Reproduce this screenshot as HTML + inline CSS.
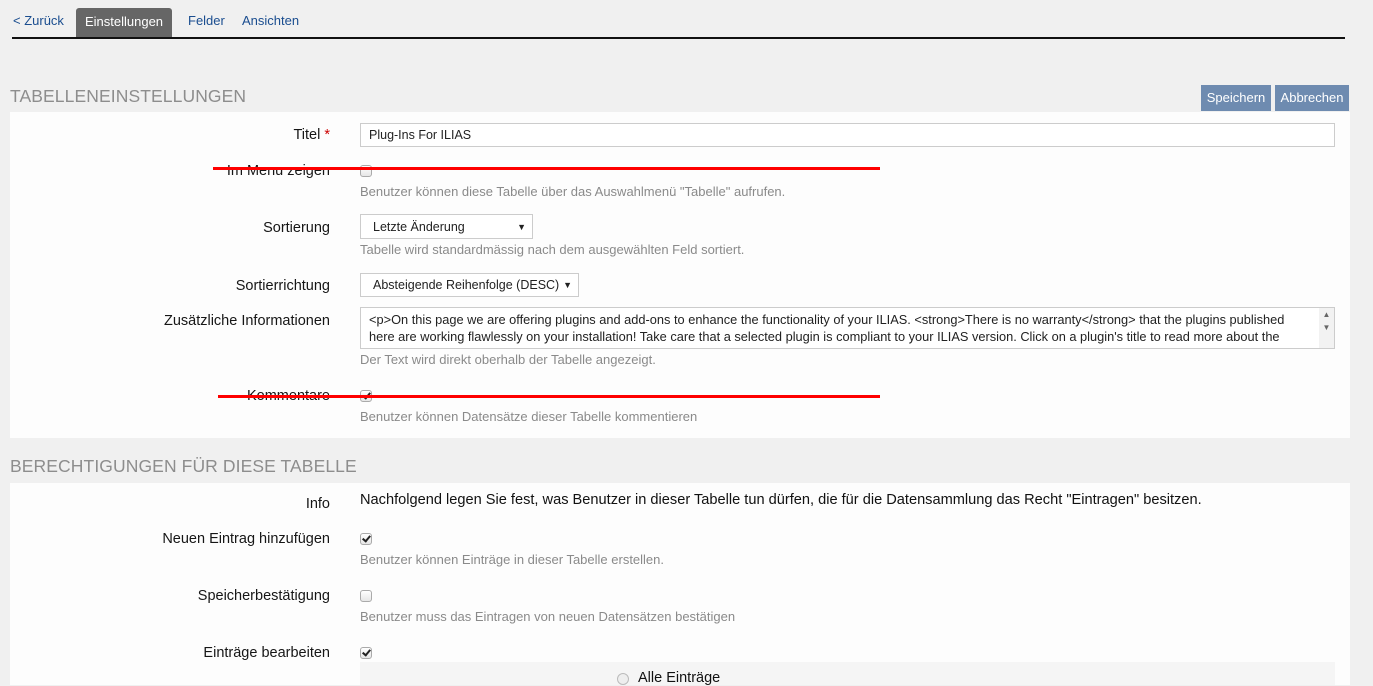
<!DOCTYPE html>
<html><head><meta charset="utf-8"><style>
*{margin:0;padding:0;box-sizing:border-box}
body{width:1373px;height:685px;overflow:hidden;background:#f0f0f0;font-family:"Liberation Sans",sans-serif;position:relative;color:#161616}
.a{position:absolute;white-space:nowrap}
.lbl{position:absolute;right:1043px;font-size:14.5px;color:#161616;white-space:nowrap}
.hint{position:absolute;left:360px;font-size:13px;color:#8a8a8a;white-space:nowrap}
.cb{position:absolute;left:360px;width:12px;height:12px;border:1px solid #aaa;border-radius:3px;background:linear-gradient(#fff,#e6e6e6)}
.cb.on::after{content:"";position:absolute;left:3px;top:0px;width:3px;height:6px;border:solid #222;border-width:0 2px 2px 0;transform:rotate(40deg)}
.inp{position:absolute;background:#fff;border:1px solid #ccc;font-size:12.5px;color:#222;padding-left:8px}
.red{position:absolute;height:3px;background:#f00}
h2{position:absolute;left:10px;font-weight:normal;font-size:17.5px;color:#8d8d8d;letter-spacing:.1px}
.btn{position:absolute;top:85px;height:26px;background:#6e8bb0;color:#fff;font-size:13px;line-height:26px;text-align:center}
</style></head><body>
<div class="a" style="left:13px;top:13px;font-size:13px;color:#1a4d8f">&lt; Zurück</div>
<div class="a" style="left:76px;top:8px;width:96px;height:30px;background:#666;border-radius:3px 3px 0 0;color:#fff;font-size:13px;line-height:27px;text-align:center">Einstellungen</div>
<div class="a" style="left:188px;top:13px;font-size:13px;color:#1a4d8f">Felder</div>
<div class="a" style="left:242px;top:13px;font-size:13px;color:#1a4d8f">Ansichten</div>
<div class="a" style="left:12px;top:37px;width:1333px;height:2px;background:#111"></div>

<h2 style="top:86px">TABELLENEINSTELLUNGEN</h2>
<div class="btn" style="left:1201px;width:70px">Speichern</div>
<div class="btn" style="left:1275px;width:74px">Abbrechen</div>

<div class="a" style="left:10px;top:112px;width:1340px;height:326px;background:#fdfdfd"></div>
<div class="lbl" style="top:127px">Titel <span style="color:#c00">*</span></div>
<div class="inp" style="left:360px;top:123px;width:975px;height:24px;line-height:22px">Plug-Ins For ILIAS</div>

<div class="lbl" style="top:163px">Im Menu zeigen</div>
<div class="cb" style="top:165px"></div>
<div class="hint" style="top:184px">Benutzer können diese Tabelle über das Auswahlmenü "Tabelle" aufrufen.</div>

<div class="lbl" style="top:220px">Sortierung</div>
<div class="inp" style="left:360px;top:214px;width:173px;height:25px;line-height:24px;padding-left:12px">Letzte Änderung<span style="position:absolute;right:6px;font-size:9px">▼</span></div>
<div class="hint" style="top:242px">Tabelle wird standardmässig nach dem ausgewählten Feld sortiert.</div>

<div class="lbl" style="top:278px">Sortierrichtung</div>
<div class="inp" style="left:360px;top:273px;width:219px;height:24px;line-height:23px;padding-left:12px">Absteigende Reihenfolge (DESC)<span style="position:absolute;right:6px;font-size:9px">▼</span></div>

<div class="lbl" style="top:313px">Zusätzliche Informationen</div>
<div class="inp" style="left:360px;top:307px;width:975px;height:42px;line-height:17px;padding-top:3px;padding-right:22px;overflow:hidden;white-space:normal;font-size:12.8px">&lt;p&gt;On this page we are offering plugins and add-ons to enhance the functionality of your ILIAS. &lt;strong&gt;There is no warranty&lt;/strong&gt; that the plugins published here are working flawlessly on your installation! Take care that a selected plugin is compliant to your ILIAS version. Click on a plugin's title to read more about the plugin and<div style="position:absolute;right:0;top:0;width:15px;height:40px;background:#f2f2f2;font-size:8px;color:#666;text-align:center;line-height:13px">▲<br>▼</div></div>
<div class="hint" style="top:352px">Der Text wird direkt oberhalb der Tabelle angezeigt.</div>

<div class="lbl" style="top:388px">Kommentare</div>
<div class="cb on" style="top:390px"></div>
<div class="hint" style="top:409px">Benutzer können Datensätze dieser Tabelle kommentieren</div>

<div class="red" style="left:213px;top:167px;width:667px"></div>
<div class="red" style="left:218px;top:395px;width:662px"></div>

<h2 style="top:456px">BERECHTIGUNGEN FÜR DIESE TABELLE</h2>
<div class="a" style="left:10px;top:483px;width:1340px;height:202px;background:#fdfdfd"></div>
<div class="lbl" style="top:496px">Info</div>
<div class="a" style="left:360px;top:492px;font-size:14.6px;color:#111">Nachfolgend legen Sie fest, was Benutzer in dieser Tabelle tun dürfen, die für die Datensammlung das Recht "Eintragen" besitzen.</div>

<div class="lbl" style="top:531px">Neuen Eintrag hinzufügen</div>
<div class="cb on" style="top:533px"></div>
<div class="hint" style="top:552px">Benutzer können Einträge in dieser Tabelle erstellen.</div>

<div class="lbl" style="top:588px">Speicherbestätigung</div>
<div class="cb" style="top:590px"></div>
<div class="hint" style="top:609px">Benutzer muss das Eintragen von neuen Datensätzen bestätigen</div>

<div class="lbl" style="top:645px">Einträge bearbeiten</div>
<div class="cb on" style="top:647px"></div>
<div class="a" style="left:360px;top:662px;width:975px;height:23px;background:#f5f5f5"></div>
<div class="a" style="left:617px;top:673px;width:12px;height:12px;border:1px solid #bbb;border-radius:50%;background:#eee"></div>
<div class="a" style="left:638px;top:670px;font-size:14.5px;color:#111">Alle Einträge</div>
</body></html>
